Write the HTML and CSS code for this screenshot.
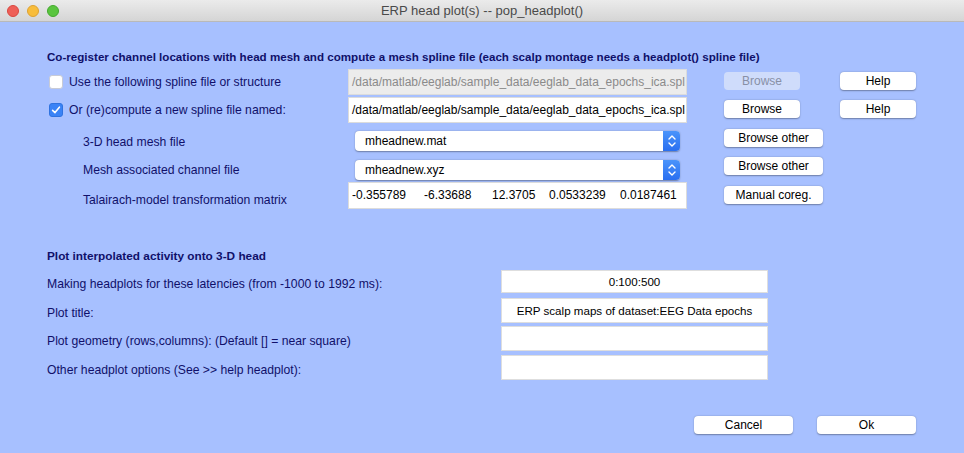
FILE: index.html
```html
<!DOCTYPE html>
<html>
<head lang="en">
    <meta charset="UTF-8">
    <title>ERP head plot(s) -- pop_headplot()</title>
    <link rel="stylesheet" href="styles.css">
</head>
<body>
<div class="win">
    <div class="titlebar">
        <div class="lights">
            <span class="dot red"></span>
            <span class="dot yellow"></span>
            <span class="dot green"></span>
        </div>
        <div class="wtitle">ERP head plot(s) -- pop_headplot()</div>
    </div>

    <div class="content">
        <!-- spline section -->
        <div class="head head1">Co-register channel locations with head mesh and compute a mesh spline file (each scalp montage needs a headplot() spline file)</div>

        <div class="row r1">
            <div class="lab chk-lab"><span class="chk"></span>Use the following spline file or structure</div>
            <div class="field off">/data/matlab/eeglab/sample_data/eeglab_data_epochs_ica.spl</div>
            <div class="btn btn-s off">Browse</div>
            <div class="btn btn-s help">Help</div>
        </div>
        <div class="row r2">
            <div class="lab chk-lab"><span class="chk on">
                <svg width="10" height="10" viewBox="0 0 10 10"><path d="M1.6 5.3 L4 7.6 L8.4 2.2" fill="none" stroke="#fff" stroke-width="1.6" stroke-linecap="round" stroke-linejoin="round"/></svg>
            </span>Or (re)compute a new spline file named:</div>
            <div class="field">/data/matlab/eeglab/sample_data/eeglab_data_epochs_ica.spl</div>
            <div class="btn btn-s">Browse</div>
            <div class="btn btn-s help">Help</div>
        </div>
        <div class="row r3">
            <div class="lab sub">3-D head mesh file</div>
            <div class="sel"><span class="sel-txt">mheadnew.mat</span><span class="arr">
                <svg width="10" height="14" viewBox="0 0 10 14"><path d="M2 5 L5 2 L8 5 M2 9 L5 12 L8 9" fill="none" stroke="#fff" stroke-width="1.4" stroke-linecap="round" stroke-linejoin="round"/></svg>
            </span></div>
            <div class="btn btn-w">Browse other</div>
        </div>
        <div class="row r4">
            <div class="lab sub">Mesh associated channel file</div>
            <div class="sel"><span class="sel-txt">mheadnew.xyz</span><span class="arr">
                <svg width="10" height="14" viewBox="0 0 10 14"><path d="M2 5 L5 2 L8 5 M2 9 L5 12 L8 9" fill="none" stroke="#fff" stroke-width="1.4" stroke-linecap="round" stroke-linejoin="round"/></svg>
            </span></div>
            <div class="btn btn-w">Browse other</div>
        </div>
        <div class="row r5">
            <div class="lab sub">Talairach-model transformation matrix</div>
            <div class="field matrix">
                <span class="m1">-0.355789</span>
                <span class="m2">-6.33688</span>
                <span class="m3">12.3705</span>
                <span class="m4">0.0533239</span>
                <span>0.0187461</span>
            </div>
            <div class="btn btn-w">Manual coreg.</div>
        </div>

        <!-- plotting section -->
        <div class="head head2">Plot interpolated activity onto 3-D head</div>

        <div class="row prow">
            <div class="plab">Making headplots for these latencies (from -1000 to 1992 ms):</div>
            <div class="pfield first">0:100:500</div>
        </div>
        <div class="row prow">
            <div class="plab">Plot title:</div>
            <div class="pfield">ERP scalp maps of dataset:EEG Data epochs</div>
        </div>
        <div class="row prow">
            <div class="plab">Plot geometry (rows,columns): (Default [] = near square)</div>
            <div class="pfield"></div>
        </div>
        <div class="row prow">
            <div class="plab">Other headplot options (See &gt;&gt; help headplot):</div>
            <div class="pfield"></div>
        </div>

        <div class="footer">
            <div class="btn btn-w">Cancel</div>
            <div class="btn btn-w">Ok</div>
        </div>
    </div>
</div>
</body>
</html>
```

FILE: styles.css
```css
* {
    margin: 0;
    padding: 0;
    box-sizing: border-box;
}

html, body {
    width: 964px;
    height: 453px;
    overflow: hidden;
}

body {
    font-family: "Liberation Sans", Arial, sans-serif;
    font-size: 12.2px;
    background: #a7c0ff;
}

.titlebar {
    height: 22px;
    display: flex;
    align-items: center;
    background: linear-gradient(#ebebeb, #d5d5d5);
    border-bottom: 1px solid #b9b9b9;
}

.lights {
    display: flex;
    gap: 8px;
    padding-left: 7px;
    width: 90px;
}

.dot {
    width: 12px;
    height: 12px;
    border-radius: 50%;
}

.red { background: #ee5f57; border: 1px solid #d9473f; }
.yellow { background: #f8bd3b; border: 1px solid #dea232; }
.green { background: #5ac53f; border: 1px solid #44a92e; }

.wtitle {
    flex: 1;
    text-align: center;
    color: #4a4a4a;
    font-size: 13px;
    padding-right: 90px;
}

.content {
    padding-left: 47px;
    color: #10106a;
}

.head {
    font-weight: bold;
    line-height: 16px;
    height: 16px;
}

.head1 { margin-top: 27px; margin-bottom: 4px; font-size: 11.6px; }
.head2 { margin-top: 38px; margin-bottom: 5px; font-size: 11.8px; }

.row {
    display: flex;
    align-items: flex-start;
    height: 28px;
}

.r3 { height: 29px; }

.lab {
    width: 301px;
    line-height: 16px;
    white-space: nowrap;
}

.chk-lab {
    display: flex;
    align-items: center;
    margin-top: 5px;
}

.chk {
    width: 14px;
    height: 14px;
    margin-left: 2px;
    margin-right: 6px;
    border-radius: 3px;
    background: #fff;
    border: 1px solid #c8cbd6;
    display: flex;
    align-items: center;
    justify-content: center;
}

.chk.on {
    background: #3a83f6;
    border-color: #2f73e0;
}

.sub {
    padding-left: 36px;
    margin-top: 9px;
}

.r4 .sub { margin-top: 8px; }
.r5 .sub { margin-top: 10px; }

.field {
    width: 339px;
    height: 26px;
    background: #fff;
    border: 1px solid #dcdcdc;
    color: #000;
    font-size: 12px;
    line-height: 24px;
    padding-left: 3px;
    white-space: nowrap;
    overflow: hidden;
}

.field.off {
    background: #ececec;
    color: #8a8a8a;
}

.matrix {
    height: 27px;
    line-height: 25px;
    display: flex;
}

.m1 { width: 72px; }
.m2 { width: 68px; }
.m3 { width: 57px; }
.m4 { width: 71px; }

.sel {
    width: 325px;
    height: 20px;
    margin: 6px 7px 0;
    background: #fff;
    border-radius: 4px;
    box-shadow: 0 0.5px 1.5px rgba(0, 0, 0, 0.35);
    display: flex;
    color: #000;
    font-size: 12px;
}

.sel-txt {
    flex: 1;
    line-height: 20px;
    padding-left: 10px;
}

.arr {
    width: 17px;
    background: linear-gradient(#4a94fb, #2a6ff0);
    border-radius: 0 4px 4px 0;
    display: flex;
    align-items: center;
    justify-content: center;
}

.btn {
    height: 18px;
    background: #fff;
    border-radius: 4px;
    box-shadow: 0 0.5px 1.5px rgba(0, 0, 0, 0.35);
    color: #000;
    font-size: 12px;
    text-align: center;
    line-height: 18px;
}

.btn-s {
    width: 76px;
    margin-top: 3px;
    margin-left: 37px;
}

.btn-s.help { margin-left: 40px; }

.btn-s.off {
    background: #cfdcfb;
    color: #8890a6;
    box-shadow: none;
}

.btn-w {
    width: 99px;
    margin-left: 37px;
    margin-top: 4px;
}

.r4 .btn-w { margin-top: 3px; }

.plab {
    width: 454px;
    line-height: 16px;
    margin-top: 7px;
    white-space: nowrap;
}

.prow { height: 28.5px; }

.pfield {
    width: 267px;
    height: 25px;
    background: #fff;
    border: 1px solid #dedede;
    color: #000;
    font-size: 11.6px;
    text-align: center;
    line-height: 23px;
}

.pfield.first {
    height: 23px;
    line-height: 21px;
    margin-top: 1px;
}

.footer {
    display: flex;
    padding-left: 647px;
    margin-top: 29px;
}

.footer .btn-w {
    margin-left: 0;
    margin-right: 24px;
}
```
